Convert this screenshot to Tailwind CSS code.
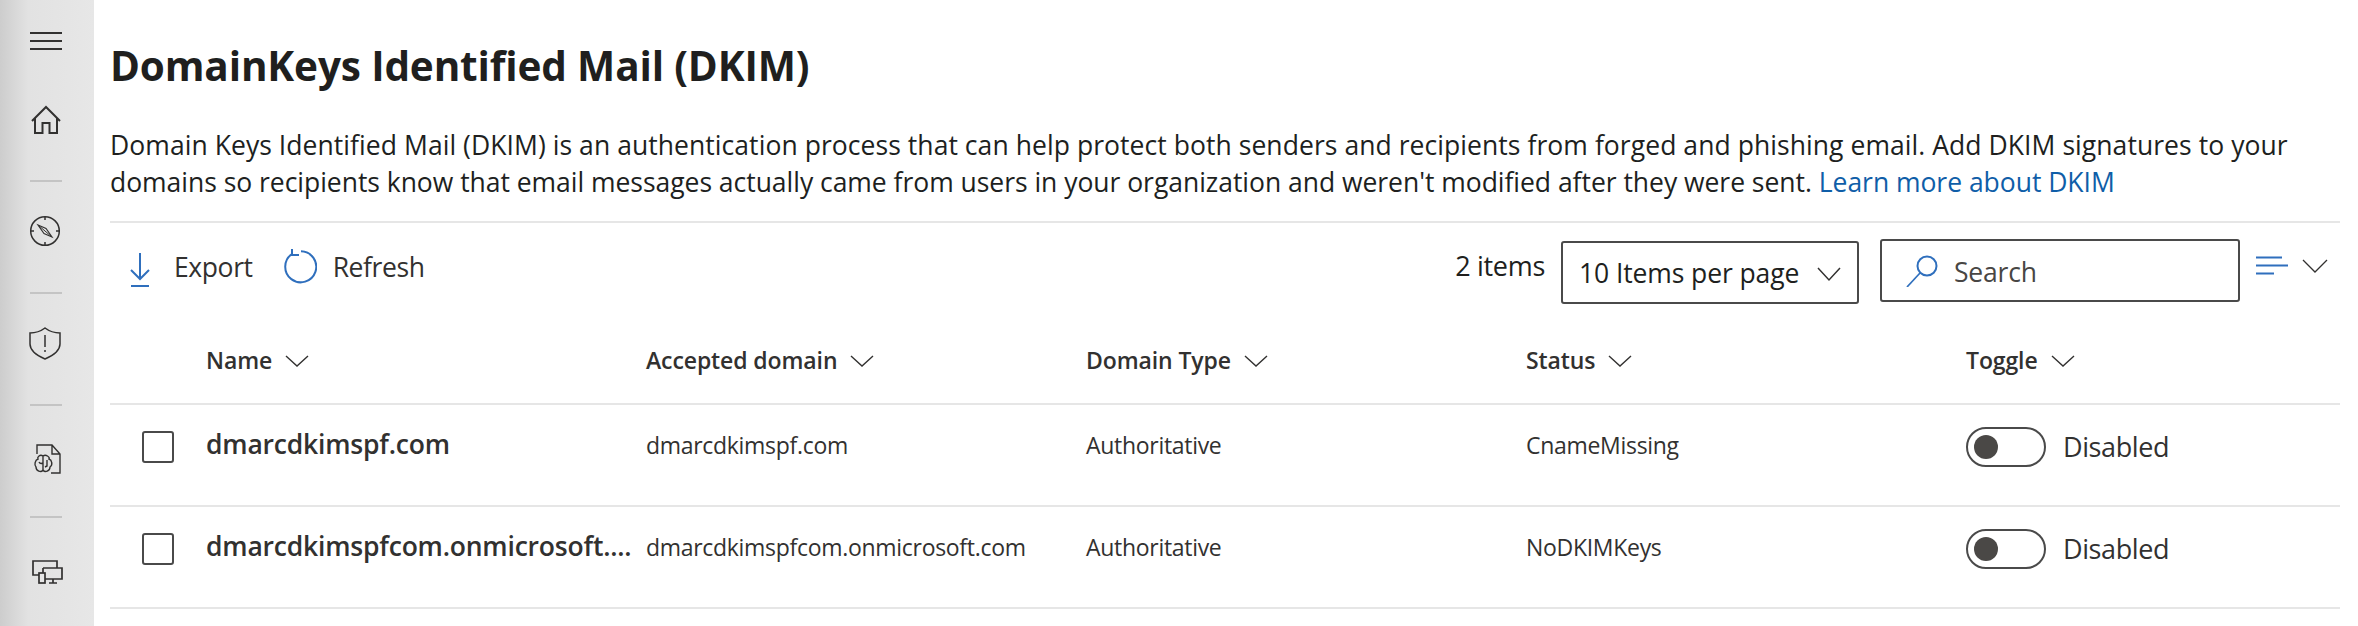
<!DOCTYPE html>
<html><head><meta charset="utf-8"><script src="https://cdn.jsdelivr.net/npm/@tailwindcss/browser@4"></script></head>
<body class="bg-white overflow-hidden">
<div class="flex w-[2358px] h-[626px] overflow-hidden font-['Open_Sans','Noto_Sans',sans-serif] text-[#323130]">
  <aside class="w-[94px] h-full shrink-0 flex flex-col items-start pl-[26px] pt-[21px] bg-gradient-to-r from-[#cdcdcd] via-[#e2e2e2] via-30% to-[#e7e7e7]">
    <svg class="w-10 h-10" viewBox="0 0 40 40" fill="none" stroke="#323130" stroke-width="2"><path d="M4 12H36M4 20H36M4 28H36"/></svg>
    <svg class="w-10 h-10 mt-[39px]" viewBox="0 0 40 40" fill="none" stroke="#323130" stroke-width="2"><path d="M6 21L20 7L34 21M9 18V33H16.5V23H23.5V33H31V18"/></svg>
    <div class="w-8 h-[2px] mt-[40px] ml-[4px] bg-[#c4c4c4]"></div>
    <svg class="w-10 h-10 mt-[29px]" viewBox="0 0 40 40" fill="none" stroke="#323130" stroke-width="1.5"><circle cx="19" cy="20" r="14.3"/><path d="M19 6V9M19 31V34M5 20H8M30 20H33"/><path d="M12 14L20 17.5L26 26L18 22.5Z" stroke-width="1.1" fill="none"/><path d="M12 14L26 26" stroke-width="1"/></svg>
    <div class="w-8 h-[2px] mt-[41px] ml-[4px] bg-[#c4c4c4]"></div>
    <svg class="w-10 h-10 mt-[30px]" viewBox="0 0 40 40" fill="none" stroke="#323130" stroke-width="1.5"><path d="M19 4C15 7 9 9 4 9V20C4 27 12 32 19 35C26 32 34 27 34 20V9C29 9 23 7 19 4Z"/><path d="M19 11V23M19 26V28"/></svg>
    <div class="w-8 h-[2px] mt-[40px] ml-[4px] bg-[#c4c4c4]"></div>
    <svg class="w-10 h-10 mt-[33px]" viewBox="0 0 40 40" fill="none" stroke="#323130" stroke-width="1.4"><path d="M11 15V6H26L34 15V34H25M26 6V15H34"/><path d="M17 17C14 15 11 18 12 20C9 21 8 26 10 28C10 32 15 34 17 31C19 34 24 32 24 28C27 26 26 21 23 20C24 18 20 15 17 17ZM17 17V31M13 23C14 25 15 25 17 24M21 21V27L19 28"/></svg>
    <div class="w-8 h-[2px] mt-[37px] ml-[4px] bg-[#c4c4c4]"></div>
    <svg class="w-10 h-10 mt-[33px]" viewBox="0 0 40 40" fill="none" stroke="#323130" stroke-width="1.7"><path d="M13 24H7V10H31V17"/><path d="M17 17H36V28H19M17 17V22M27 28V32M23 32H31"/><rect x="13" y="22" width="6" height="10" fill="#e6e6e6"/></svg>
  </aside>
  <main class="flex-1 pl-[16px] pr-[18px]">
    <h1 class="text-[40.5px] leading-[50px] font-bold text-[#201f1e] mt-[41px] tracking-[-0.15px] whitespace-nowrap">DomainKeys Identified Mail (DKIM)</h1>
    <p class="text-[26.5px] leading-[37px] mt-[36px] text-[#201f1e] whitespace-nowrap"><span class="tracking-[0.06px]">Domain Keys Identified Mail (DKIM) is an authentication process that can help protect both senders and recipients from forged and phishing email. Add DKIM signatures to your</span><br><span class="tracking-[-0.03px]">domains so recipients know that email messages actually came from users in your organization and weren't modified after they were sent. <span class="text-[#0f5ea8]">Learn more about DKIM</span></span></p>
    <div class="h-[2px] bg-[#e6e6e6] mt-[20px]"></div>
    <div class="flex items-start h-[81px] text-[27px] text-[#323130]">
      <svg class="w-6 h-10 mt-[26px] ml-[18px]" viewBox="0 0 24 40" fill="none" stroke="#2f6fbd" stroke-width="2"><path d="M12 4V29M3 21L12 30L21 21M3 37H21"/></svg>
      <span class="ml-[22px] mt-[24px] leading-[40px] text-[26.5px] tracking-[-0.4px]">Export</span>
      <svg class="w-9 h-9 mt-[25px] ml-[28px]" viewBox="0 0 36 36" fill="none" stroke="#2f6fbd" stroke-width="2"><path d="M11 6A15.5 15.5 0 1 0 20 3.3"/><path d="M11 1V7H18"/></svg>
      <span class="ml-[16px] mt-[24px] leading-[40px] text-[26.5px] tracking-[-0.4px]">Refresh</span>
      <div class="flex-1"></div>
      <span class="mt-[23px] leading-[40px] text-[27px] tracking-[-0.3px] text-[#201f1e] mr-[16px]">2 items</span>
      <div class="mt-[18px] w-[298px] h-[63px] shrink-0 border-2 border-[#4a4a4a] rounded-[3px] flex items-center pl-[16px] pt-[2px] text-[26.5px] tracking-[-0.1px] text-[#201f1e]">10 Items per page
        <svg class="w-6 h-4 ml-[18px]" viewBox="0 0 24 16" fill="none" stroke="#323130" stroke-width="1.5"><path d="M1 2L12 14L23 2"/></svg>
      </div>
      <div class="mt-[16px] ml-[21px] w-[360px] h-[63px] shrink-0 border-2 border-[#4a4a4a] rounded-[3px] flex items-center pl-[24px] text-[26.5px] text-[#484644] tracking-[-0.2px]">
        <svg class="w-8 h-8 mr-[16px]" viewBox="0 0 32 32" fill="none" stroke="#2f6fbd" stroke-width="2"><circle cx="21" cy="11" r="9.5"/><path d="M14 18L1 32" stroke-width="1.7"/></svg><span class="pt-[5px]">Search</span>
      </div>
      <svg class="w-[72px] h-5 mt-[33px] ml-[16px] mr-[12px] shrink-0" viewBox="0 0 72 20" fill="none" stroke-width="2"><path d="M0 1.5H26M0 9.5H32M0 17.5H18" stroke="#2f6fbd" stroke-width="2.2"/><path d="M47 4L59 16L71 4" stroke="#323130" stroke-width="1.3"/></svg>
    </div>
    <div class="grid grid-cols-[96px_440px_440px_440px_440px_1fr] h-[101px] items-center text-[23px] font-semibold tracking-[-0.1px] text-[#323130] pt-[14px] border-b-2 border-[#e6e6e6]">
      <div></div>
      <div class="flex items-center gap-[13px]">Name<svg class="w-6 h-3" viewBox="0 0 24 12" fill="none" stroke="#323130" stroke-width="1.4"><path d="M1 1L12 11L23 1"/></svg></div>
      <div class="flex items-center gap-[13px]">Accepted domain<svg class="w-6 h-3" viewBox="0 0 24 12" fill="none" stroke="#323130" stroke-width="1.4"><path d="M1 1L12 11L23 1"/></svg></div>
      <div class="flex items-center gap-[13px]">Domain Type<svg class="w-6 h-3" viewBox="0 0 24 12" fill="none" stroke="#323130" stroke-width="1.4"><path d="M1 1L12 11L23 1"/></svg></div>
      <div class="flex items-center gap-[13px]">Status<svg class="w-6 h-3" viewBox="0 0 24 12" fill="none" stroke="#323130" stroke-width="1.4"><path d="M1 1L12 11L23 1"/></svg></div>
      <div class="flex items-center gap-[13px]">Toggle<svg class="w-6 h-3" viewBox="0 0 24 12" fill="none" stroke="#323130" stroke-width="1.4"><path d="M1 1L12 11L23 1"/></svg></div>
    </div>
    <div class="grid grid-cols-[96px_440px_440px_440px_440px_1fr] h-[102px] items-center pb-[16px] text-[23px] tracking-[-0.3px] text-[#323130] border-b-2 border-[#e6e6e6]">
      <div class="pl-[32px]"><div class="w-8 h-8 border-2 border-[#4a4a4a] rounded-[3px]"></div></div>
      <div class="text-[26.5px] font-semibold tracking-[-0.2px] mb-[4px]">dmarcdkimspf.com</div>
      <div class="mb-[4px]">dmarcdkimspf.com</div>
      <div class="mb-[4px]">Authoritative</div>
      <div class="mb-[4px]">CnameMissing</div>
      <div class="flex items-center"><div class="w-20 h-10 border-2 border-[#4a4a4a] rounded-full flex items-center pl-[6px]"><div class="w-6 h-6 rounded-full bg-[#4a4846]"></div></div><span class="ml-[17px] text-[27px] tracking-[-0.4px]">Disabled</span></div>
    </div>
    <div class="grid grid-cols-[96px_440px_440px_440px_440px_1fr] h-[102px] items-center pb-[16px] text-[23px] tracking-[-0.3px] text-[#323130] border-b-2 border-[#e6e6e6]">
      <div class="pl-[32px]"><div class="w-8 h-8 border-2 border-[#4a4a4a] rounded-[3px]"></div></div>
      <div class="text-[26.5px] font-semibold tracking-[-0.2px] mb-[4px] whitespace-nowrap">dmarcdkimspfcom.onmicrosoft....</div>
      <div class="mb-[4px]">dmarcdkimspfcom.onmicrosoft.com</div>
      <div class="mb-[4px]">Authoritative</div>
      <div class="mb-[4px]">NoDKIMKeys</div>
      <div class="flex items-center"><div class="w-20 h-10 border-2 border-[#4a4a4a] rounded-full flex items-center pl-[6px]"><div class="w-6 h-6 rounded-full bg-[#4a4846]"></div></div><span class="ml-[17px] text-[27px] tracking-[-0.4px]">Disabled</span></div>
    </div>
  </main>
</div>
</body></html>
